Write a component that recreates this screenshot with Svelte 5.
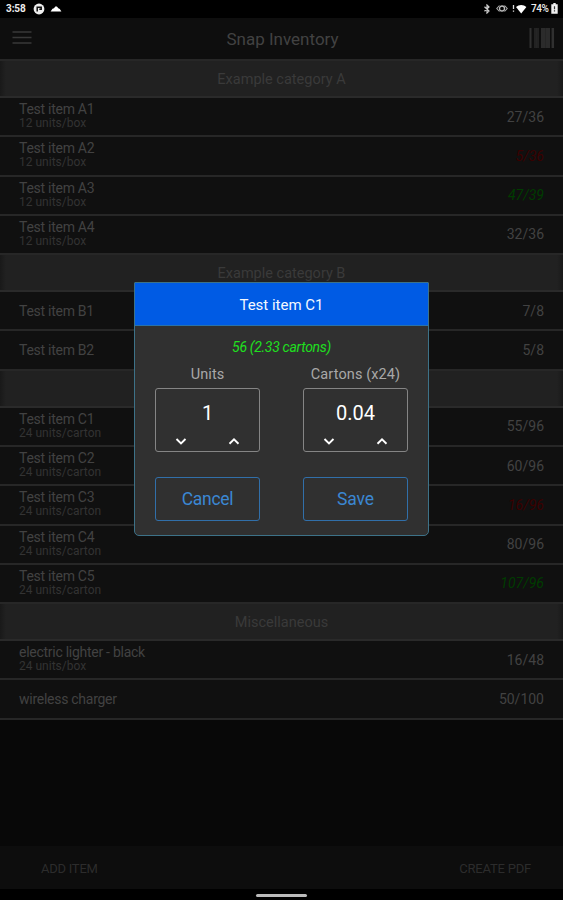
<script lang="ts">
  type Item = { name: string; pack?: string; count: string; level?: string };
  type Category = { title: string; items: Item[] };

  const categories: Category[] = [
    {
      title: "Example category A",
      items: [
        { name: "Test item A1", pack: "12 units/box", count: "27/36" },
        { name: "Test item A2", pack: "12 units/box", count: "5/36", level: "low" },
        { name: "Test item A3", pack: "12 units/box", count: "47/39", level: "over" },
        { name: "Test item A4", pack: "12 units/box", count: "32/36" },
      ],
    },
    {
      title: "Example category B",
      items: [
        { name: "Test item B1", count: "7/8" },
        { name: "Test item B2", count: "5/8" },
      ],
    },
    {
      title: "",
      items: [
        { name: "Test item C1", pack: "24 units/carton", count: "55/96" },
        { name: "Test item C2", pack: "24 units/carton", count: "60/96" },
        { name: "Test item C3", pack: "24 units/carton", count: "16/96", level: "low" },
        { name: "Test item C4", pack: "24 units/carton", count: "80/96" },
        { name: "Test item C5", pack: "24 units/carton", count: "107/96", level: "over" },
      ],
    },
    {
      title: "Miscellaneous",
      items: [
        { name: "electric lighter - black", pack: "24 units/box", count: "16/48" },
        { name: "wireless charger", count: "50/100" },
      ],
    },
  ];

  const unitsPerCarton = 24;
  let units = $state(1);
  let open = $state(true);
  let cartons = $derived((units / unitsPerCarton).toFixed(2));
</script>

{#snippet stepper(label: string, value: string | number, step: number)}
  <div class="field">
    <span class="label">{label}</span>
    <div class="stepper">
      <span class="value">{value}</span>
      <div class="arrows">
        <button aria-label="decrease" onclick={() => (units -= step)}>
          <svg width="12" height="8" viewBox="0 0 12 8"><path d="M1.5 2 6 6.4l4.5-4.4" /></svg>
        </button>
        <button aria-label="increase" onclick={() => (units += step)}>
          <svg width="12" height="8" viewBox="0 0 12 8"><path d="M1.5 6.800 6 2.400l4.500 4.400" /></svg>
        </button>
      </div>
    </div>
  </div>
{/snippet}

<div class="screen">
  <div class="status">
    <span class="clock">3:58</span>
    <svg class="dot" width="12" height="12" viewBox="0 0 12 12">
      <circle cx="6" cy="6" r="5.4" fill="#eee" />
      <path d="M4.2 8.5V4.2h4v2.1H6.3" fill="none" stroke="#111" stroke-width="1.5" />
    </svg>
    <svg width="12" height="8" viewBox="0 0 12 8">
      <path d="M.6 6.500 2.500 3.800 4 3.300 5.300 1.500h1.600l1.400 1.800 1.500.6 1.600 2.600z" fill="#fff" />
    </svg>
    <div class="status-right">
      <svg width="8" height="10" viewBox="0 0 8 10">
        <path d="M1.5 2.8 6 7 4 9V1l2 2-4.5 4.2" fill="none" stroke="#ccc" stroke-width="1.2" />
      </svg>
      <svg class="eye" width="12" height="9" viewBox="0 0 12 9">
        <path d="M3.5 1.5.8 4.5l2.7 3M8.5 1.5l2.7 3-2.700 3" fill="none" stroke="#aaa" stroke-width="1.1" />
        <circle cx="6" cy="4.5" r="2.5" fill="none" stroke="#bbb" stroke-width="1.3" />
      </svg>
      <svg class="wifi" width="15" height="10" viewBox="0 0 15 10">
        <path d="M1.500 1v4M1.5 6.5v1.200" stroke="#ddd" stroke-width="1.300" />
        <path d="M4 3a7.5 7.5 0 0 1 10.4 0L9.2 9.5z" fill="#fff" />
      </svg>
      <span class="percent">74%</span>
      <svg width="7" height="11" viewBox="0 0 7 11">
        <path d="M2.3 0h2.400v1.200H6.700v9.500H.3V1.200h2z" fill="#eee" />
        <path d="M3.5 3.3v3M3.5 7.3v1.300" stroke="#333" stroke-width="1.200" />
      </svg>
    </div>
  </div>

  <header>
    <svg width="20" height="15" viewBox="0 0 20 15">
      <path d="M.5 2h19M.5 7.5h19M.5 13h19" stroke="#383838" stroke-width="1.5" />
    </svg>
    <h1>Snap Inventory</h1>
    <svg width="26" height="20" viewBox="0 0 26 20">
      <path d="M1.5 0v20" stroke="#303030" stroke-width="2" />
      <path d="M5 0h5v20H5z" fill="#222" />
      <path d="M12 0h9v20h-9z" fill="#2b2b2b" />
      <path d="M16.5 0v20M7.5 0v20" stroke="#252525" />
      <path d="M23.8 0v20" stroke="#303030" stroke-width="2.5" />
    </svg>
  </header>

  <main>
    {#each categories as category}
      <h2>{category.title}</h2>
      {#each category.items as item}
        <div class="row">
          <div>
            <div class="name">{item.name}</div>
            {#if item.pack}
              <div class="pack">{item.pack}</div>
            {/if}
          </div>
          <span class="count {item.level ?? ''}">{item.count}</span>
        </div>
      {/each}
    {/each}
  </main>

  <footer>
    <span class="add">ADD ITEM</span>
    <span class="pdf">CREATE PDF</span>
  </footer>
  <div class="nav"><div class="pill"></div></div>

  {#if open}
    <div class="modal">
      <h3>Test item C1</h3>
      <p class="total">56 (2.33 cartons)</p>
      <div class="grid">
        {@render stepper("Units", units, 1)}
        {@render stepper("Cartons (x24)", cartons, unitsPerCarton)}
        <button class="action" onclick={() => (open = false)}>Cancel</button>
        <button class="action save" onclick={() => (open = false)}>Save</button>
      </div>
    </div>
  {/if}
</div>

<style>
  :global(body) {
    margin: 0;
    background: #080808;
  }
  * {
    box-sizing: border-box;
    margin: 0;
  }
  .screen {
    position: relative;
    display: flex;
    flex-direction: column;
    width: 563px;
    height: 900px;
    overflow: hidden;
    background: #080808;
    color: #424242;
    font-family: Roboto, sans-serif;
  }
  .status {
    display: flex;
    align-items: center;
    height: 18px;
    padding: 0 5px 1px 6px;
    background: #000;
    color: #eee;
  }
  .clock {
    width: 27px;
    font-size: 10px;
    font-weight: 700;
    letter-spacing: -0.1px;
  }
  .dot {
    margin-right: 5px;
  }
  .status-right {
    display: flex;
    align-items: center;
    margin-left: auto;
  }
  .eye {
    margin: 0 4px 0 5px;
  }
  .wifi {
    margin-right: 4px;
  }
  .percent {
    width: 20px;
    font-size: 10px;
    font-weight: 500;
    letter-spacing: -0.4px;
  }
  header {
    display: flex;
    align-items: center;
    justify-content: space-between;
    height: 41px;
    padding: 0 8px 2px 12px;
    background: #0e0e0e;
  }
  h1 {
    padding: 2px 0 0 4px;
    font-size: 17px;
    font-weight: 400;
  }
  main {
    flex: 1;
    border-top: 2px solid #272727;
  }
  h2 {
    display: flex;
    align-items: center;
    justify-content: center;
    height: 37.1px;
    padding-top: 2px;
    border-bottom: 2px solid #2a2a2a;
    background: linear-gradient(90deg, #191919, #212121 6px, #212121 557px, #191919);
    font-size: 14.5px;
    font-weight: 400;
    color: #3a3a3a;
  }
  .row {
    display: flex;
    align-items: center;
    justify-content: space-between;
    height: 39.25px;
    padding: 0 19px;
    border-bottom: 2px solid #272727;
    background: #101010;
  }
  .name {
    font-size: 14px;
    line-height: 16px;
    letter-spacing: -0.27px;
  }
  .pack {
    margin-top: -1px;
    padding-bottom: 2px;
    font-size: 12px;
    line-height: 14px;
    color: #333;
  }
  .count {
    font-size: 14px;
  }
  .low {
    font-style: italic;
    color: #3a0000;
  }
  .over {
    font-style: italic;
    color: #003c00;
  }
  footer {
    display: flex;
    align-items: center;
    justify-content: space-between;
    height: 43px;
    padding: 2px 32px 0 41px;
    background: #0d0d0d;
    font-size: 13px;
    color: #2c2c2c;
  }
  .add {
    letter-spacing: -0.25px;
  }
  .pdf {
    letter-spacing: -0.2px;
  }
  .nav {
    display: flex;
    justify-content: center;
    height: 11px;
    padding-top: 5px;
    background: #000;
  }
  .pill {
    width: 51px;
    height: 3px;
    border-radius: 2px;
    background: #bbb;
  }
  .modal {
    position: absolute;
    top: 282px;
    left: 134px;
    width: 295px;
    height: 254px;
    border: 1px solid #3d7288;
    border-radius: 1px 1px 5px 5px;
    background: #303030;
    text-align: center;
  }
  h3 {
    height: 43px;
    border-bottom: 1px solid #2a72a8;
    background: #005be4;
    font-size: 15px;
    font-weight: 400;
    line-height: 45px;
    color: #f4f8ff;
  }
  .total {
    height: 38px;
    padding-top: 12px;
    font-size: 14px;
    font-style: italic;
    line-height: 18px;
    letter-spacing: -0.3px;
    color: #1fe01f;
  }
  .grid {
    display: grid;
    grid-template-columns: 105px 105px;
    gap: 25px 43px;
    justify-content: center;
  }
  .field {
    display: flex;
    flex-direction: column;
  }
  .label {
    height: 24px;
    font-size: 14.5px;
    line-height: 21px;
    letter-spacing: 0.1px;
    white-space: nowrap;
    color: #a8a8a8;
  }
  .stepper {
    height: 64px;
    border: 1px solid #858585;
    border-radius: 3px;
  }
  .value {
    display: block;
    height: 48px;
    font-size: 20px;
    line-height: 49px;
    color: #fff;
  }
  .arrows {
    display: flex;
    justify-content: space-between;
    padding: 0 19px;
  }
  .arrows button {
    display: flex;
    padding: 0;
    border: 0;
    background: none;
  }
  .arrows path {
    fill: none;
    stroke: #fff;
    stroke-width: 1.9;
  }
  .action {
    height: 44px;
    padding: 0;
    border: 1px solid #316fa9;
    border-radius: 3px;
    background: none;
    font: 400 17.5px Roboto, sans-serif;
    letter-spacing: -0.3px;
    color: #3b87d2;
  }
  .save {
    letter-spacing: -0.1px;
  }
</style>
